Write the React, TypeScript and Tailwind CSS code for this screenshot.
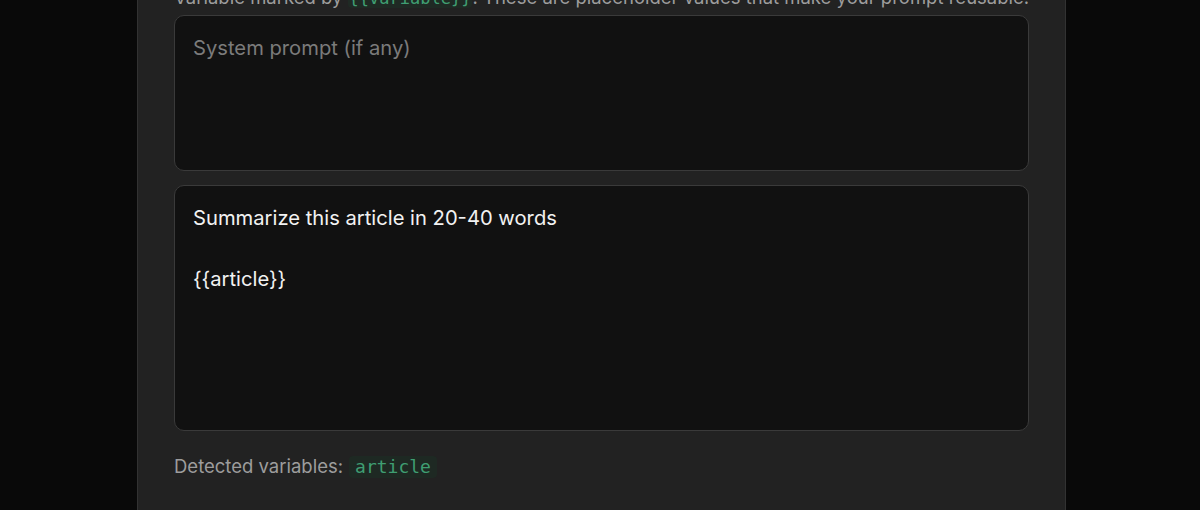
import React from "react";

export default function App() {
  return (
    <div className="w-[1200px] h-[510px] bg-[#090909] overflow-hidden flex font-['Inter',sans-serif]">
      <div className="ml-[137px] w-[929px] h-full bg-[#222222] border-x border-[#323232] px-[36px]">
        <p className="-mt-[16px] text-[18.5px] leading-[26px] text-[#9d9d9d] whitespace-nowrap">
          Variable marked by{" "}
          <span className="font-['DejaVu_Sans_Mono',monospace] text-[17px] text-[#3f9e72] bg-[#1f2a24] rounded px-[1px]">
            {"{{variable}}"}
          </span>
          . These are placeholder values that make your prompt reusable.
        </p>
        <div className="mt-[4px] h-[156px] rounded-[10px] border border-[#3a3a3a] bg-[#111111] px-[18px] pt-[17px] text-[20.2px] leading-[30.5px] text-[#7b7b7b]">
          System prompt (if any)
        </div>
        <div className="mt-[14px] h-[246px] rounded-[10px] border border-[#3a3a3a] bg-[#111111] px-[18px] pt-[17px] text-[20.2px] leading-[30.5px] text-[#f2f2f2]">
          <div>Summarize this article in 20-40 words</div>
          <div>&nbsp;</div>
          <div>{"{{article}}"}</div>
        </div>
        <div className="mt-[25px] flex items-center gap-[6px] h-[22px]">
          <span className="text-[18.5px] text-[#9d9d9d]">Detected variables:</span>
          <span className="font-['DejaVu_Sans_Mono',monospace] text-[18px] leading-[22px] text-[#3f9e72] bg-[#1e2923] rounded-[4px] px-[6px]">
            article
          </span>
        </div>
      </div>
    </div>
  );
}
